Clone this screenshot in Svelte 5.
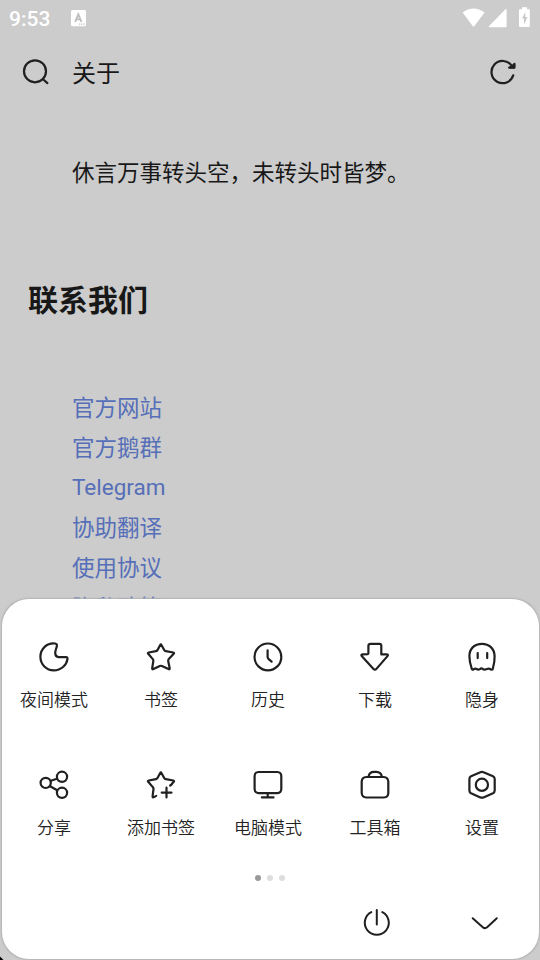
<script>
  const links = ['官方网站', '官方鹅群', 'Telegram', '协助翻译', '使用协议', '隐私政策'];
  const tools = [
    { label: '夜间模式', paths: ['M17.2 2.5C8.8 1.5 2.4 8 2.4 15.8C2.4 23.5 8.5 29.4 15.8 29.4C23 29.4 28.7 24.2 29.5 17.8Q29.6 16.1 28 16.1H20.6Q17.2 15.8 17.2 12.1C17.2 9 18.6 7.3 18.9 4.6Q19 2.8 17.2 2.5Z'] },
    { label: '书签', paths: ['M15.2 4Q15.8 2.6 16.5 4L19.3 9.2Q19.8 10.1 20.8 10.2L28.3 11.5Q29.6 11.8 28.7 12.8L23.8 18.1Q23 19 23.2 20.1L24.7 27.2Q24.9 28.8 23.5 28.1L16.9 25Q15.8 24.5 14.8 25L8.4 28.1Q7 28.8 7.2 27.2L8.3 20.1Q8.5 19 7.8 18.1L3.2 12.8Q2.4 11.8 3.7 11.5L11 10.2Q12 10 12.5 9.1Z'] },
    { label: '历史', paths: ['M29.3 15.9A13.4 13.4 0 1 1 2.5 15.9A13.4 13.4 0 0 1 29.3 15.9', 'M15.6 9.3V15.8Q15.6 17.2 16.7 18.2L19.6 20.7'] },
    { label: '下载', paths: ['M11.5 2.8H20.5Q22.3 2.8 22.3 4.6V13.4H27.9Q29.6 13.7 28.5 15.1L17.4 27.9Q16 29.5 14.5 27.9L2.7 15.1Q1.7 13.8 3.5 13.4L8.7 13.1Q9.4 13 9.4 12.2V4.8Q9.4 2.8 11.5 2.8Z'] },
    { label: '隐身', paths: ['M5.8 27.8Q3.3 21 3.4 15.1C3.5 7.5 8.5 2.8 15.9 2.8S28.3 7.5 28.6 15.1Q28.8 21 26.8 27.8Q26.3 29.2 24.5 28.2Q22.8 27.2 20.8 28.1Q18.2 29.2 16.6 27.8Q15.2 27 13.9 28.1Q12.2 29 10.6 28Q9 27.2 7.8 28.3Q6.3 29.2 5.8 27.8Z', 'M11.7 12V17.1M21.2 12V17.1'] },
    { label: '分享', paths: ['M12.8 13.9A5.1 5.1 0 1 1 2.6 13.9A5.1 5.1 0 0 1 12.8 13.9', 'M29.1 7.8A5.1 5.1 0 1 1 18.9 7.8A5.1 5.1 0 0 1 29.1 7.8', 'M29.1 23.8A5.1 5.1 0 1 1 18.9 23.8A5.1 5.1 0 0 1 29.1 23.8', 'M12.8 11.8L18.9 9.8M12.1 17.2L19.2 21.2'] },
    { label: '添加书签', paths: ['M27 15.2L25.2 16.5M26.8 15L28.7 12.8Q29.5 11.8 28.3 11.5L20.8 10.2Q19.8 10.1 19.3 9.2L16.5 4Q15.8 2.6 15.2 4L12.5 9.1Q12 10 11 10.2L3.7 11.5Q2.4 11.8 3.2 12.8L7.8 18.1Q8.7 19 8.5 20.1L7.6 27.2Q7.5 28.8 9 28.1L11.2 26.9', 'M21.5 18.7V28.5M16.7 23.6H26.5'] },
    { label: '电脑模式', paths: ['M6.4 3H25.4Q29.2 3.2 29.3 7V20Q29.2 23.8 25.4 24.1H6.4Q2.7 23.8 2.6 20V7Q2.7 3.2 6.4 3Z', 'M15.7 24.2V28.4M9.9 28.4H21.5'] },
    { label: '工具箱', paths: ['M7.3 8H24.8Q28.9 8.3 29.3 12.5V24Q29.2 28.2 25 28.5H7.3Q3 28.2 2.7 24V12.5Q2.9 8.3 7.3 8Z', 'M9.5 7.8Q10.3 2.8 15 2.8H17.4Q22 2.9 22.9 7.8'] },
    { label: '设置', paths: ['M14.4 3.2Q16 2.5 17.5 3.2L27 7.3Q28.7 8.1 28.7 10V21.5Q28.7 23.4 27 24.2L17.5 28.4Q16 29 14.4 28.4L5 24.2Q3.4 23.4 3.4 21.5V10Q3.4 8.1 5 7.3Z', 'M22 15.8A6.1 6.1 0 1 1 9.8 15.8A6.1 6.1 0 0 1 22 15.8'] }
  ];
</script>

<main class="screen">
  <header class="status">
    <span class="time">9:53</span>
    <svg class="ime" width="15" height="17" viewBox="0 0 15 17">
      <rect width="15" height="16.3" rx="1.5" fill="#fff" />
      <path d="M4.2 11.8L7.3 4.2L10.4 11.8M5.3 9.4H9.4" fill="none" stroke="#bfbfbf" stroke-width="1.9" />
      <path d="M8 14.2H14" stroke="#c0c0c0" stroke-width="1.3" stroke-dasharray="1.3 .9" />
    </svg>
    <svg class="signals" width="70" height="22" viewBox="0 0 70 22" fill="#fff">
      <path d="M.6 4.5Q11.5-3.6 22.6 4.5L12.2 18.3Q11.6 19.2 10.9 18.3Z" />
      <path d="M44.6 1.6V18.3Q44.6 19.2 43.7 19.2H27.5Q26.3 19 27.1 18L43.3 1.4Q44.4.5 44.6 1.6Z" />
      <path d="M58 1.2H60V-.8H65V1.2H67Q67.8 1.3 67.8 2.2V18.1Q67.8 19 67 19H58Q57 19 57 18.1V2.2Q57 1.2 58 1.2Z" />
      <path d="M63.3 4L60 10.6H62V16.2L65.5 9H63.3Z" fill="#c9c9c9" />
    </svg>
  </header>

  <div class="addressbar">
    <svg width="32" height="32" viewBox="0 0 32 32" class="stroke">
      <circle cx="15" cy="15.3" r="11" />
      <path d="M23 23.2L27.4 27.1" />
    </svg>
    <span class="title">关于</span>
    <svg width="32" height="32" viewBox="0 0 32 32" class="stroke reload">
      <path d="M26.2 19.4A11.1 11.1 0 1 1 24.7 9.7" />
      <path d="M27.4 7.8V11.7H22.2" />
      <path d="M27.1 8.7V11.5H23Z" fill="#222" />
    </svg>
  </div>

  <article>
    <p>休言万事转头空，未转头时皆梦。</p>
    <h1>联系我们</h1>
    <ul>
      {#each links as link}<li class:latin={link === 'Telegram'}>{link}</li>{/each}
    </ul>
  </article>

  <section class="sheet">
    <div class="grid">
      {#each tools as tool}
        <div class="tool">
          <svg width="32" height="32" viewBox="0 0 32 32" class="stroke">
            {#each tool.paths as d}<path {d} />{/each}
          </svg>
          <span>{tool.label}</span>
        </div>
      {/each}
    </div>
    <div class="dots"><i class="active"></i><i></i><i></i></div>
    <footer>
      <svg width="32" height="32" viewBox="0 0 32 32" class="thin">
        <path d="M11.3 6.1A12 12 0 1 0 22.3 6.1M16.8 4V18.5" />
      </svg>
      <svg width="32" height="32" viewBox="0 0 32 32" class="thin">
        <path d="M4.7 12.2L14.8 21.2Q16.9 23 19.1 21.2L28.8 12.2" />
      </svg>
    </footer>
  </section>
  <svg class="corner" width="4" height="4" viewBox="0 0 4 4"><path d="M0 .5V4H3.5Z" /></svg>
</main>

<style>
  .screen {
    position: relative;
    width: 540px;
    height: 960px;
    overflow: hidden;
    background: #ccc;
    color: #181818;
    font-family: Roboto, 'Noto Sans CJK SC', sans-serif;
  }
  svg { display: block; flex: none; }
  .stroke, .thin { fill: none; stroke: #202020; stroke-width: 2.2; stroke-linecap: round; stroke-linejoin: round; }
  .thin { stroke-width: 2; }
  .status { display: flex; height: 40px; box-sizing: border-box; padding: 8px 9px 0; color: #fff; }
  .time { width: 62px; font-size: 21px; line-height: 22px; font-weight: 500; }
  .ime { margin-top: 2px; }
  .signals { margin-left: auto; margin-right: -.5px; overflow: visible; }
  .addressbar { display: flex; align-items: center; height: 64px; padding: 0 21px 0 20px; }
  .title { margin-left: 20px; padding-top: 4px; font-size: 24px; line-height: 36px; }
  .reload { margin-left: auto; }
  article { padding: 49px 28px 0; }
  p { margin: 0 0 0 44px; font-size: 22.5px; line-height: 40px; }
  h1 { margin: 82px 0 0; font-size: 30px; line-height: 52px; font-weight: 700; }
  ul { list-style: none; margin: 60px 0 0 44px; padding: 0; font-size: 22.5px; line-height: 40px; color: #566fb8; }
  li { height: 40px; box-sizing: border-box; padding-top: 1px; }
  .latin { padding-top: 0; }
  .sheet {
    position: absolute;
    inset: 599px 1.5px 1.5px 1.5px;
    border-radius: 27px;
    background: #fff;
    box-shadow: 0 0 1.5px .5px #b4b4b4;
  }
  .grid { display: grid; grid-template-columns: repeat(5, 107px); grid-auto-rows: 128px; margin-left: -1px; padding-top: 42px; }
  .tool { display: flex; flex-direction: column; align-items: center; }
  .tool span { margin-top: 15px; font-size: 17px; line-height: 25px; font-weight: 350; white-space: nowrap; color: #222; }
  .dots { display: flex; gap: 6px; margin: -22px 0 0 253.5px; }
  .dots i { width: 6px; height: 6px; border-radius: 50%; background: #ddd; }
  .dots .active { background: #999; }
  footer { display: flex; gap: 76px; padding: 25px 0 0 358.5px; }
  .corner { position: absolute; left: 0; bottom: 0; }
</style>
